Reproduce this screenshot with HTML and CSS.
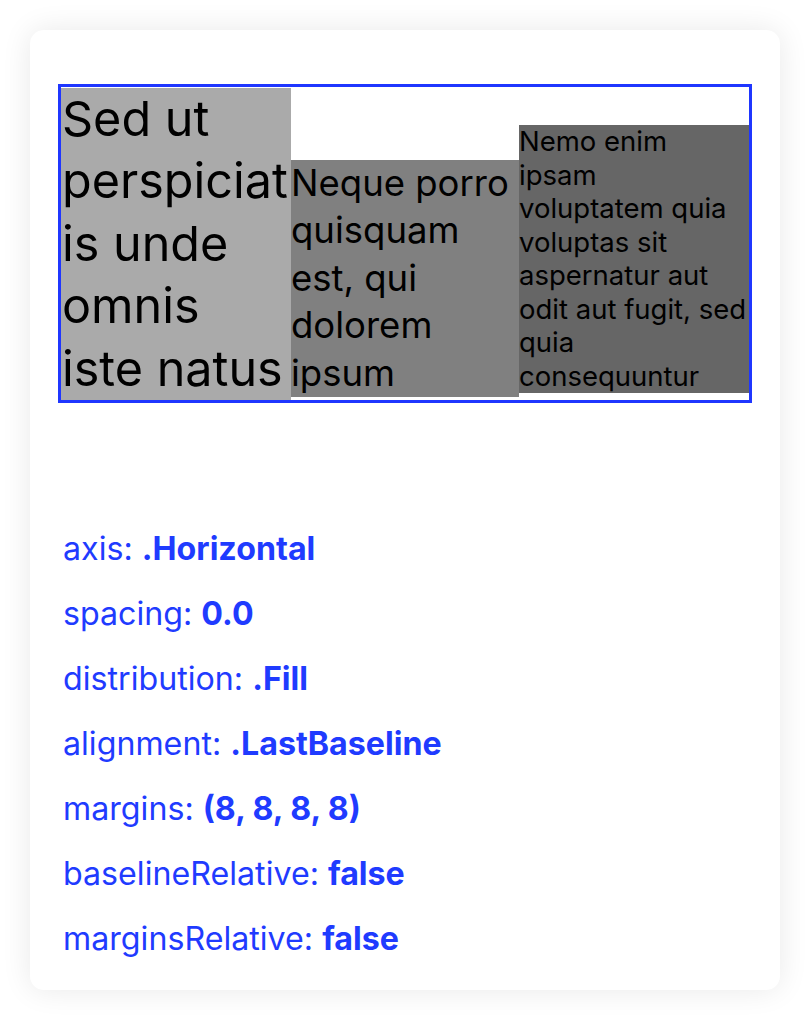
FILE: index.html
```html
<!DOCTYPE html>
<html>
<head>
<meta charset="utf-8">
<link rel="stylesheet" href="styles.css">
</head>
<body>
<div class="card">
  <div class="stack">
    <div class="cell c1">Sed ut<br>perspiciat<br>is unde<br>omnis<br>iste natus</div>
    <div class="cell c2">Neque porro<br>quisquam<br>est, qui<br>dolorem<br>ipsum</div>
    <div class="cell c3">Nemo enim<br>ipsam<br>voluptatem quia<br>voluptas sit<br>aspernatur aut<br>odit aut fugit, sed<br>quia<br>consequuntur</div>
  </div>
  <div class="props">
    <div class="prop">axis: <b>.Horizontal</b></div>
    <div class="prop">spacing: <b>0.0</b></div>
    <div class="prop">distribution: <b>.Fill</b></div>
    <div class="prop">alignment: <b>.LastBaseline</b></div>
    <div class="prop">margins: <b>(8, 8, 8, 8)</b></div>
    <div class="prop">baselineRelative: <b>false</b></div>
    <div class="prop">marginsRelative: <b>false</b></div>
  </div>
</div>
</body>
</html>
```
FILE: styles.css
```css
html, body {
  margin: 0;
  padding: 0;
  background: #ffffff;
  font-family: Inter, "Noto Sans", sans-serif;
}
body {
  padding: 30px;
  width: 750px;
}
.card {
  background: #ffffff;
  border-radius: 14px;
  box-shadow: 0 0 30px rgba(0, 0, 0, 0.09);
  padding: 54px 28px 17px 28px;
  height: 960px;
  box-sizing: border-box;
}
.stack {
  border: 3px solid #1f36ff;
  display: flex;
  align-items: last baseline;
  width: 688px;
  height: 313px;
}
.cell {
  color: #000;
  white-space: nowrap;
  overflow: hidden;
}
.c1 {
  width: 230px;
  background: #aaaaaa;
  font-size: 48.5px;
  line-height: 62.5px;
  padding-left: 1px;
  box-sizing: border-box;
}
.c2 {
  width: 228px;
  background: #808080;
  font-size: 36.5px;
  line-height: 47.5px;
}
.c3 {
  width: 230px;
  background: #666666;
  font-size: 27.5px;
  line-height: 33.5px;
}
.props {
  margin-top: 113px;
  padding-left: 5px;
}
.prop {
  color: #1f3bff;
  font-size: 32.2px;
  line-height: 65px;
}
.prop b {
  font-weight: 700;
}
```
